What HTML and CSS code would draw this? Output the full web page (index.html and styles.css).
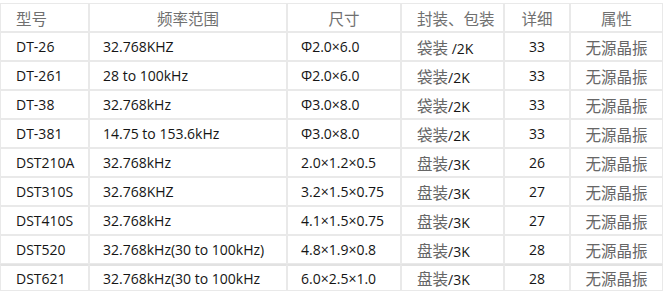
FILE: index.html
```html
<!DOCTYPE html>
<html lang="zh-CN">
<head>
    <meta charset="UTF-8">
    <title>无源晶振</title>
    <link rel="stylesheet" href="styles.css">
</head>
<body>
    <table class="spec-table">
        <colgroup>
            <col class="c-model">
            <col class="c-freq">
            <col class="c-size">
            <col class="c-pack">
            <col class="c-detail">
            <col class="c-attr">
        </colgroup>
        <thead>
            <tr>
                <th class="left">型号</th>
                <th>频率范围</th>
                <th>尺寸</th>
                <th class="left">封装、包装</th>
                <th>详细</th>
                <th>属性</th>
            </tr>
        </thead>
        <tbody>
            <tr><td>DT-26</td><td>32.768KHZ</td><td>Φ2.0×6.0</td><td><span class="cn">袋装</span> /2K</td><td class="num">33</td><td class="cn center">无源晶振</td></tr>
            <tr><td>DT-261</td><td>28 to 100kHz</td><td>Φ2.0×6.0</td><td><span class="cn">袋装</span>/2K</td><td class="num">33</td><td class="cn center">无源晶振</td></tr>
            <tr><td>DT-38</td><td>32.768kHz</td><td>Φ3.0×8.0</td><td><span class="cn">袋装</span>/2K</td><td class="num">33</td><td class="cn center">无源晶振</td></tr>
            <tr><td>DT-381</td><td>14.75 to 153.6kHz</td><td>Φ3.0×8.0</td><td><span class="cn">袋装</span>/2K</td><td class="num">33</td><td class="cn center">无源晶振</td></tr>
            <tr><td>DST210A</td><td>32.768kHz</td><td>2.0×1.2×0.5</td><td><span class="cn">盘装</span>/3K</td><td class="num">26</td><td class="cn center">无源晶振</td></tr>
            <tr><td>DST310S</td><td>32.768KHZ</td><td>3.2×1.5×0.75</td><td><span class="cn">盘装</span>/3K</td><td class="num">27</td><td class="cn center">无源晶振</td></tr>
            <tr><td>DST410S</td><td>32.768kHz</td><td>4.1×1.5×0.75</td><td><span class="cn">盘装</span>/3K</td><td class="num">27</td><td class="cn center">无源晶振</td></tr>
            <tr><td>DST520</td><td>32.768kHz(30 to 100kHz)</td><td>4.8×1.9×0.8</td><td><span class="cn">盘装</span>/3K</td><td class="num">28</td><td class="cn center">无源晶振</td></tr>
            <tr class="last"><td>DST621</td><td>32.768kHz(30 to 100kHz</td><td>6.0×2.5×1.0</td><td><span class="cn">盘装</span>/3K</td><td class="num">28</td><td class="cn center">无源晶振</td></tr>
        </tbody>
    </table>
</body>
</html>
```

FILE: styles.css
```css
body {
    margin: 0;
    padding: 3px 0 0 0;
    background-color: #ffffff;
    font-family: 'Open Sans', 'Noto Sans CJK SC', sans-serif;
    font-size: 14px;
    color: #151515;
}

.spec-table {
    width: 663px;
    border-collapse: separate;
    border-spacing: 0;
    table-layout: fixed;
}

.c-model { width: 89px; }
.c-freq { width: 198px; }
.c-size { width: 114px; }
.c-pack { width: 103px; }
.c-detail { width: 66px; }
.c-attr { width: 93px; }

.spec-table th,
.spec-table td {
    border: 1px solid #e9e9e9;
    height: 27px;
    padding: 0 0 0 13px;
    text-align: left;
    white-space: nowrap;
    overflow: hidden;
}

.spec-table th {
    font-family: 'Noto Sans CJK SC', sans-serif;
    font-weight: normal;
    font-size: 15.5px;
    color: #707070;
    text-align: center;
    padding: 0;
}

.spec-table th.left {
    text-align: left;
    padding-left: 15px;
}

.spec-table td:first-child {
    padding-left: 15px;
}

.spec-table td:nth-child(4) {
    padding-left: 15px;
}

.cn {
    font-family: 'Noto Sans CJK SC', sans-serif;
    font-size: 15.5px;
    color: #666666;
}

.spec-table td.num,
.spec-table td.center {
    text-align: center;
    padding: 0;
}

.spec-table tr.last td {
    border-top: 2px solid #e2e2e2;
    height: 24px;
}
```
